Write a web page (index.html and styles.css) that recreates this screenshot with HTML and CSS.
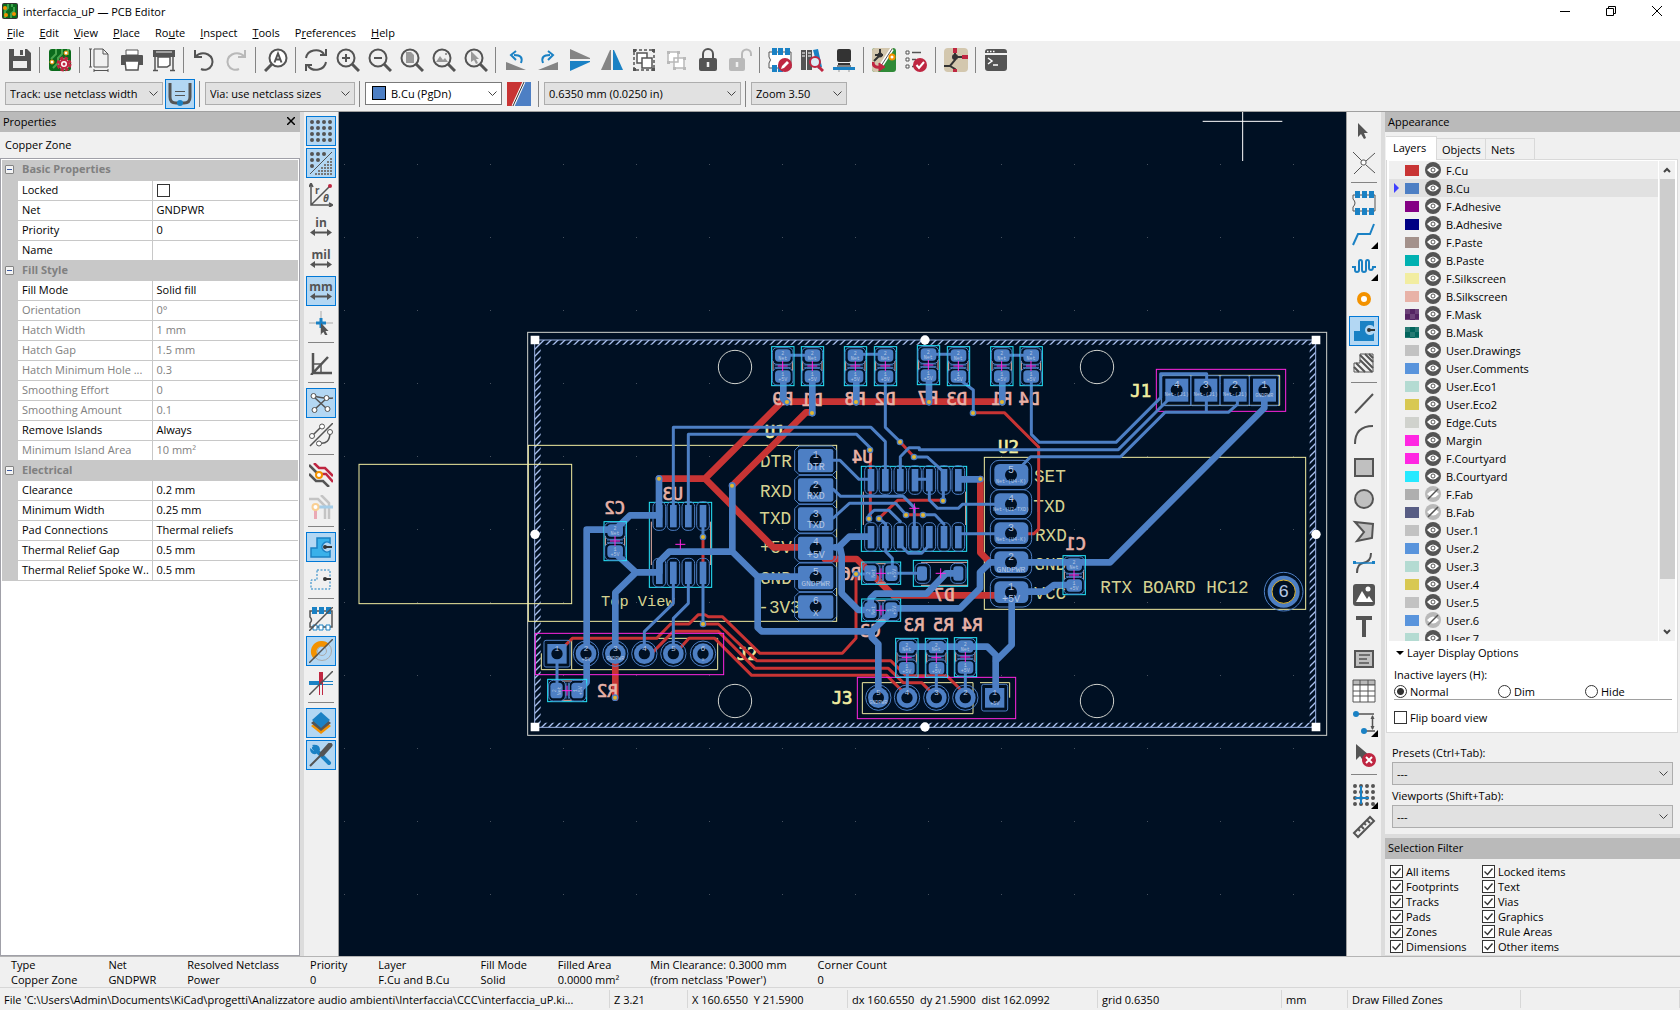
FILE: index.html
```html
<!DOCTYPE html>
<html lang="en">
<head>
    <meta charset="UTF-8">
    <meta name="viewport" content="width=device-width, initial-scale=1.0">
    <title>interfaccia_uP — PCB Editor</title>
    <link rel="stylesheet" href="styles.css">
</head>
<body>
    <header class="titlebar">
        <svg class="app-icon" viewBox="0 0 16 16"><rect width="16" height="16" rx="2" fill="#333"/><rect x="1" y="1" width="14" height="14" fill="#0b6b1c"/><path d="M6 1v4l-3 3v7M10 1v3M9 15v-4l3-3V4" fill="none" stroke="#3fa34d" stroke-width="2"/><circle cx="3" cy="5" r="2" fill="#f39200"/><circle cx="12" cy="11" r="2" fill="#f39200"/><circle cx="4" cy="12" r="2" fill="#f39200"/></svg>
        <h1>interfaccia_uP — PCB Editor</h1>
        <div class="window-buttons">
            <button aria-label="Minimize"><svg viewBox="0 0 10 10"><path d="M0 5.5h10"/></svg></button>
            <button aria-label="Restore"><svg viewBox="0 0 10 10"><path d="M.5 2.5h7v7h-7zM2.5 2.5v-2h7v7h-2"/></svg></button>
            <button aria-label="Close"><svg viewBox="0 0 10 10"><path d="M0 0l10 10M10 0L0 10"/></svg></button>
        </div>
    </header>

    <nav class="menubar">
        <a href="#"><u>F</u>ile</a>
        <a href="#"><u>E</u>dit</a>
        <a href="#"><u>V</u>iew</a>
        <a href="#"><u>P</u>lace</a>
        <a href="#">Ro<u>u</u>te</a>
        <a href="#"><u>I</u>nspect</a>
        <a href="#"><u>T</u>ools</a>
        <a href="#">P<u>r</u>eferences</a>
        <a href="#"><u>H</u>elp</a>
    </nav>

    <div class="toolbars">
        <div class="toolbar">
            <button aria-label="Save"><svg viewBox="0 0 24 24"><path d="M1 1h18l4 4v18H1z" fill="#545454"/><path d="M6 1h11v7H6zM5 13h14v7H5z" fill="#f0f0f0"/><path d="M12 2h3v5h-3z" fill="#545454"/></svg></button>
            <span class="sep"></span>
            <button aria-label="Board setup"><svg viewBox="0 0 24 24"><rect x="1" y="1" width="22" height="22" rx="3" fill="#0b6b1c"/><path d="M8 1v5L3 11M14 1v5l-4 4v5l-5 5M20 1v6" fill="none" stroke="#4aa64f" stroke-width="2"/><circle cx="4" cy="14" r="2" fill="#fff" stroke="#f39200"/><circle cx="18" cy="5" r="2" fill="#fff" stroke="#f39200"/><circle cx="16" cy="16" r="5.500" fill="#fff" stroke="#bf2641" stroke-width="4" stroke-dasharray="3 1.300"/><circle cx="16" cy="16" r="4" fill="#fff" stroke="#bf2641" stroke-width="2"/><circle cx="16" cy="16" r="1.500" fill="#bf2641"/></svg></button>
            <span class="sep"></span>
            <button aria-label="Page settings"><svg viewBox="0 0 24 24" class="line"><path d="M6 1h9l5 5v13H6zM15 1v5h5M2.500 1v18M1 1h3M1 19h3M6 22.500h14M6 21v3M20 21v3"/></svg></button>
            <button aria-label="Print"><svg viewBox="0 0 24 24"><path d="M6 2h12v5H6z" fill="#fff" stroke="#545454"/><path d="M1 8q0-1 1-1h20q1 0 1 1v9H1z" fill="#545454"/><path d="M5 13h14l-1 9H6z" fill="#fff" stroke="#545454" stroke-width="1.500"/></svg></button>
            <button aria-label="Plot"><svg viewBox="0 0 24 24"><path d="M1 2h22v7H1z" fill="#545454"/><path d="M4 4h16" stroke="#f0f0f0"/><path d="M6 9h12v8l-3 2H6z" fill="#fff" stroke="#545454" stroke-width="1.500"/><path d="M3 9v14M21 9v14M1 22.500h5M18 22.500h5" stroke="#545454" stroke-width="1.500"/></svg></button>
            <span class="sep"></span>
            <button aria-label="Undo"><svg viewBox="0 0 24 24" class="thick"><path d="M3 2v7h7M3 9q6-6 13-2.500A8 8 0 1 1 9 21"/></svg></button>
            <button aria-label="Redo" disabled><svg viewBox="0 0 24 24" class="thick pale"><path d="M21 2v7h-7M21 9q-6-6-13-2.500A8 8 0 1 0 15 21"/></svg></button>
            <span class="sep"></span>
            <button aria-label="Find"><svg viewBox="0 0 24 24" class="thick"><circle cx="14" cy="10" r="8.500" fill="#fff"/><path d="M8 16l-7 7" stroke-width="3"/><path d="M10.500 14.500L14 5.500l3.500 9M12 11.500h4"/></svg></button>
            <span class="sep"></span>
            <button aria-label="Refresh"><svg viewBox="0 0 24 24" class="thick"><path d="M2 10a10 9 0 0 1 18-4M22 1v6h-6M22 14a10 9 0 0 1-18 4M2 23v-6h6"/></svg></button>
            <button aria-label="Zoom in"><svg viewBox="0 0 24 24" class="thick"><circle cx="10" cy="10" r="8.500"/><path d="M16 16l7 7" stroke-width="3"/><path d="M6 10h8M10 6v8"/></svg></button>
            <button aria-label="Zoom out"><svg viewBox="0 0 24 24" class="thick"><circle cx="10" cy="10" r="8.500"/><path d="M16 16l7 7" stroke-width="3"/><path d="M6 10h8"/></svg></button>
            <button aria-label="Zoom to fit page"><svg viewBox="0 0 24 24" class="thick"><circle cx="10" cy="10" r="8.500"/><path d="M16 16l7 7" stroke-width="3"/><path d="M6 4h5l3 3v8H6z" fill="#999" stroke="none"/></svg></button>
            <button aria-label="Zoom to objects"><svg viewBox="0 0 24 24" class="thick"><circle cx="10" cy="10" r="8.500"/><path d="M16 16l7 7" stroke-width="3"/><path d="M4 14l4-6 3 4 2-2 3 4zM13 5h2v2h-2z" fill="#999" stroke="none"/></svg></button>
            <button aria-label="Zoom to selection"><svg viewBox="0 0 24 24" class="thick"><circle cx="10" cy="10" r="8.500"/><path d="M16 16l7 7" stroke-width="3"/><path d="M7 3v11l3-2 2 4 2-1-2-4h3z" fill="#999" stroke="none"/></svg></button>
            <span class="sep"></span>
            <button aria-label="Rotate counterclockwise"><svg viewBox="0 0 24 24"><path d="M2 14l20 8H2z" fill="#848484"/><path d="M17 15q3-8-7-8M12 3L7 7l5 5" fill="none" stroke="#1a81c4" stroke-width="2"/></svg></button>
            <button aria-label="Rotate clockwise"><svg viewBox="0 0 24 24"><path d="M22 14L2 22h20z" fill="#848484"/><path d="M7 15Q4 7 14 7M12 3l5 4-5 5" fill="none" stroke="#1a81c4" stroke-width="2"/></svg></button>
            <button aria-label="Mirror vertically"><svg viewBox="0 0 24 24"><path d="M2 1l20 9v1H2z" fill="#848484"/><path d="M2 23l20-9v-1H2z" fill="#1a81c4"/></svg></button>
            <button aria-label="Mirror horizontally"><svg viewBox="0 0 24 24"><path d="M1 22L10 2h1v20z" fill="#848484"/><path d="M23 22L14 2h-1v20z" fill="#1a81c4"/></svg></button>
            <button aria-label="Group"><svg viewBox="0 0 24 24"><rect x="2" y="2" width="20" height="20" fill="none" stroke="#545454" stroke-width="1.500" stroke-dasharray="3 2"/><path d="M5 5h10v10H5z" fill="#fff" stroke="#545454" stroke-width="1.500"/><path d="M10 10h10v10H10z" fill="#fff" stroke="#545454" stroke-width="1.500"/><path d="M1 1h3v3H1zM20 1h3v3h-3zM1 20h3v3H1zM20 20h3v3h-3z" fill="#545454"/></svg></button>
            <button aria-label="Ungroup" disabled><svg viewBox="0 0 24 24"><path d="M4 4h10v10H4zM10 10h10v10H10z" fill="#fff" stroke="#b9b9b9" stroke-width="1.500"/><path d="M3 3h3v3H3zM13 3h3v3h-3zM3 13h3v3H3zM19 9h3v3h-3zM9 19h3v3H9zM19 19h3v3h-3z" fill="#b9b9b9"/></svg></button>
            <button aria-label="Lock"><svg viewBox="0 0 24 24"><path d="M7 11V6a5 5 0 0 1 10 0v5" fill="none" stroke="#545454" stroke-width="2"/><rect x="3" y="10" width="18" height="13" rx="2" fill="#545454"/><path d="M12 14v5" stroke="#f0f0f0" stroke-width="2.500"/></svg></button>
            <button aria-label="Unlock" disabled><svg viewBox="0 0 24 24"><path d="M14 11V6a4.500 4.500 0 0 1 9 0v2" fill="none" stroke="#b9b9b9" stroke-width="2"/><rect x="1" y="10" width="16" height="13" rx="2" fill="#b9b9b9"/><path d="M9 14v5" stroke="#f0f0f0" stroke-width="2.500"/></svg></button>
            <span class="sep"></span>
            <button aria-label="Footprint editor"><svg viewBox="0 0 24 24"><path d="M1 4h22v16H1v-5q3-3 0-6z" fill="#fff" stroke="#545454"/><path d="M4 0h5v7H4zM10 0h5v7h-5zM17 0h5v7h-5zM4 17h5v7H4zM10 17h5v7h-5z" fill="#1a81c4"/><circle cx="17" cy="17" r="7" fill="#bf2641"/><path d="M13 21l1-3 5-5 2 2-5 5z" fill="#fff"/></svg></button>
            <button aria-label="Footprint library browser"><svg viewBox="0 0 24 24"><path d="M1 2h5v20H1zM7 2h5v20H7z" fill="#545454"/><path d="M2 5h3M2 8h3M8 5h3M8 8h3" stroke="#fff"/><path d="M13 2l5-1 4 18-4 2z" fill="#1a81c4"/><path d="M18 18l5 5" stroke="#bf2641" stroke-width="3"/><circle cx="15" cy="14" r="5" fill="#dcecf5" stroke="#bf2641" stroke-width="2"/></svg></button>
            <button aria-label="3D viewer"><svg viewBox="0 0 24 24"><rect x="5" y="1" width="14" height="13" rx="2" fill="#333"/><path d="M6 15h12v2H6z" fill="#333"/><path d="M5 17h14v2H5z" fill="#848484"/><path d="M1 19h22v3H1z" fill="#1a81c4"/><path d="M7 22v2M17 22v2" stroke="#999"/></svg></button>
            <span class="sep"></span>
            <button aria-label="Update PCB from schematic"><svg viewBox="0 0 24 24"><rect x="0" y="0" width="24" height="24" rx="3" fill="#2f8a37"/><path d="M3 0h18L6 24H3q-3 0-3-3V3q0-3 3-3z" fill="#d3c7ae"/><path d="M8 1v6M3 7h8M8 7l-6 6" stroke="#333" stroke-width="2"/><circle cx="8" cy="7" r="2.500" fill="#333"/><path d="M20 1L9 18" stroke="#fff" stroke-width="4"/><path d="M20 1L9 18" stroke="#545454"/><circle cx="20" cy="9" r="2.500" fill="#fff" stroke="#f39200" stroke-width="2"/><path d="M1 14q0 6 7 5" fill="none" stroke="#bf2641" stroke-width="3"/><path d="M7 15l6 4-6 4z" fill="#bf2641" stroke="#bf2641"/></svg></button>
            <button aria-label="Design rules checker"><svg viewBox="0 0 24 24"><path d="M2 3h3v3H2zM2 10h3v3H2zM2 17h3v3H2z" fill="#fff" stroke="#545454"/><path d="M8 4.500h9M8 11.500h4M8 18.500h3" stroke="#545454" stroke-width="1.500"/><circle cx="16" cy="17" r="7" fill="#bf2641"/><path d="M12.500 17l2.500 3 5-6" fill="none" stroke="#fff" stroke-width="2"/></svg></button>
            <span class="sep"></span>
            <button aria-label="Schematic editor"><svg viewBox="0 0 24 24"><rect width="24" height="24" rx="4" fill="#d3c7ae"/><path d="M11 0v12l-5 6H0M11 9h8M6 18l5 3v3" fill="none" stroke="#333" stroke-width="2"/><circle cx="11" cy="9" r="3" fill="#333"/><path d="M9 0h4v5H9zM18 7h6v4h-6zM9 21h4v3H9z" fill="#bf2641"/></svg></button>
            <span class="sep"></span>
            <button aria-label="Scripting console"><svg viewBox="0 0 24 24"><path d="M1 4q0-3 3-3h16q3 0 3 3v1H1zM1 7h22v13q0 3-3 3H4q-3 0-3-3z" fill="#545454"/><path d="M3 3.500h1.500M6 3.500h1.500M9 3.500h1.500" stroke="#fff" stroke-width="1.500"/><path d="M4 10l4 3-4 3M9 17h5" fill="none" stroke="#fff" stroke-width="1.500"/></svg></button>
        </div>
        <div class="toolbar">
            <select class="track" aria-label="Track width"><option>Track: use netclass width</option></select>
            <button class="on" aria-label="Auto track width"><svg viewBox="0 0 24 24"><path d="M2 1v14q0 6 6 6h8q6 0 6-6V1" fill="none" stroke="#545454" stroke-width="3"/><path d="M7 9.500h10M7 13.500h10" stroke="#545454"/><circle cx="12" cy="21" r="3" fill="#1a81c4"/></svg></button>
            <span class="sep"></span>
            <select class="via" aria-label="Via size"><option>Via: use netclass sizes</option></select>
            <span class="sep"></span>
            <div class="layer-select">
                <span class="layer-swatch"></span>
                <select aria-label="Active layer"><option>B.Cu (PgDn)</option></select>
            </div>
            <button class="pair" aria-label="Layer pair"><svg viewBox="0 0 24 24"><path d="M0 0h24v24H0z" fill="#4d7fc4"/><path d="M0 0h17L6 24H0z" fill="#c83434"/><path d="M17 0L6 24" stroke="#fff" stroke-width="3"/><path d="M17 0L6 24" stroke="#333"/></svg></button>
            <span class="sep"></span>
            <select class="grid" aria-label="Grid"><option>0.6350 mm (0.0250 in)</option></select>
            <span class="sep"></span>
            <select class="zoom" aria-label="Zoom"><option>Zoom 3.50</option></select>
        </div>
    </div>

    <main class="workspace">
        <section class="properties">
            <div class="caption"><h2>Properties</h2><button aria-label="Close panel"><svg viewBox="0 0 8 8"><path d="M0 0l8 8M8 0L0 8"/></svg></button></div>
            <p class="item-type">Copper Zone</p>
            <div class="grid-box">
                <table>
                    <colgroup><col class="gutter"><col class="name"><col></colgroup>
                    <tbody>
                        <tr class="category"><td><button aria-label="Collapse"></button></td><th colspan="2">Basic Properties</th></tr>
                        <tr><td></td><th><label for="locked">Locked</label></th><td><input type="checkbox" id="locked"></td></tr>
                        <tr><td></td><th>Net</th><td>GNDPWR</td></tr>
                        <tr><td></td><th>Priority</th><td>0</td></tr>
                        <tr><td></td><th>Name</th><td></td></tr>
                        <tr class="category"><td><button aria-label="Collapse"></button></td><th colspan="2">Fill Style</th></tr>
                        <tr><td></td><th>Fill Mode</th><td>Solid fill</td></tr>
                        <tr class="off"><td></td><th>Orientation</th><td>0°</td></tr>
                        <tr class="off"><td></td><th>Hatch Width</th><td>1 mm</td></tr>
                        <tr class="off"><td></td><th>Hatch Gap</th><td>1.5 mm</td></tr>
                        <tr class="off"><td></td><th>Hatch Minimum Hole ...</th><td>0.3</td></tr>
                        <tr class="off"><td></td><th>Smoothing Effort</th><td>0</td></tr>
                        <tr class="off"><td></td><th>Smoothing Amount</th><td>0.1</td></tr>
                        <tr><td></td><th>Remove Islands</th><td>Always</td></tr>
                        <tr class="off"><td></td><th>Minimum Island Area</th><td>10 mm²</td></tr>
                        <tr class="category"><td><button aria-label="Collapse"></button></td><th colspan="2">Electrical</th></tr>
                        <tr><td></td><th>Clearance</th><td>0.2 mm</td></tr>
                        <tr><td></td><th>Minimum Width</th><td>0.25 mm</td></tr>
                        <tr><td></td><th>Pad Connections</th><td>Thermal reliefs</td></tr>
                        <tr><td></td><th>Thermal Relief Gap</th><td>0.5 mm</td></tr>
                        <tr><td></td><th>Thermal Relief Spoke W..</th><td>0.5 mm</td></tr>
                    </tbody>
                </table>
            </div>
        </section>

        <div class="side-tools left">
            <button class="on" aria-label="Show grid"><svg viewBox="0 0 24 24"><path d="M3 3h20M3 9h20M3 15h20M3 21h20" stroke="#545454" stroke-width="4" stroke-linecap="round" stroke-dasharray="0 6"/></svg></button>
            <button class="on" aria-label="Grid overrides"><svg viewBox="0 0 24 24"><path d="M3 3h14M3 9h8M3 15h2" stroke="#545454" stroke-width="4" stroke-linecap="round" stroke-dasharray="0 6"/><path d="M1 23L23 1" stroke="#545454"/><path d="M21 8h3M18 11h6M15 14h9M12 17h12M9 20h15M6 23h18" stroke="#777" stroke-width="2" stroke-dasharray="2 1"/></svg></button>
            <button aria-label="Polar coordinates"><svg viewBox="0 0 24 24"><path d="M2 1v21h21M2 22L21 3M0 4l2-4 2 4M20 20l4 2-4 2" fill="none" stroke="#545454" stroke-width="1.500"/><circle cx="21" cy="3" r="2" fill="#bf2641"/><text x="6" y="11" class="glyph">r</text><text x="14" y="19" class="glyph italic">θ</text></svg></button>
            <button aria-label="Inches"><svg viewBox="0 0 24 24"><text x="12" y="12" class="unit">in</text><path d="M4 17.500h16" stroke="#545454" stroke-width="2"/><path d="M6 14v7l-5-3.500zM18 14v7l5-3.500z" fill="#545454"/></svg></button>
            <button aria-label="Mils"><svg viewBox="0 0 24 24"><text x="12" y="12" class="unit">mil</text><path d="M4 17.500h16" stroke="#545454" stroke-width="2"/><path d="M6 14v7l-5-3.500zM18 14v7l5-3.500z" fill="#545454"/></svg></button>
            <button class="on" aria-label="Millimeters"><svg viewBox="0 0 24 24"><text x="12" y="12" class="unit">mm</text><path d="M4 17.500h16" stroke="#545454" stroke-width="2"/><path d="M6 14v7l-5-3.500zM18 14v7l5-3.500z" fill="#545454"/></svg></button>
            <button aria-label="Full-window crosshairs"><svg viewBox="0 0 24 24"><path d="M12 0v24M0 12h24" stroke="#aaa"/><path d="M12 7v10M7 12h10" stroke="#1a81c4" stroke-width="3"/><path d="M12 12v11l2.500-2 2 4 2-1-2-4h3z" fill="#545454"/></svg></button>
            <span class="sep"></span>
            <button aria-label="Limit to 45 degrees"><svg viewBox="0 0 24 24"><path d="M4 2v20h19M2 24L19 6" fill="none" stroke="#545454" stroke-width="2.500"/><path d="M4 13h8v9" fill="none" stroke="#545454" stroke-width="1.500"/></svg></button>
            <span class="sep"></span>
            <button class="on" aria-label="Ratsnest"><svg viewBox="0 0 24 24"><path d="M4 5q14 3 20 2M5 6l13 12M18 7L6 18" fill="none" stroke="#545454" stroke-width="1.500"/><g fill="#fff" stroke="#545454"><circle cx="4.500" cy="5" r="2.500"/><circle cx="17.500" cy="7" r="2.500"/><circle cx="5.500" cy="19" r="2.500"/><circle cx="18.500" cy="18" r="2.500"/></g></svg></button>
            <button aria-label="Curved ratsnest"><svg viewBox="0 0 24 24"><path d="M1 23L24 0M3 13L13 3M10 20q11 2 11-11" fill="none" stroke="#545454" stroke-width="1.500"/><g fill="#fff" stroke="#545454"><circle cx="3" cy="13" r="2.500"/><circle cx="13" cy="3.500" r="2.500"/><circle cx="10" cy="20.500" r="2.500"/><circle cx="21" cy="9" r="2.500"/></g></svg></button>
            <span class="sep"></span>
            <button aria-label="High contrast"><svg viewBox="0 0 24 24"><path d="M0 2l9 9M0 11l7 7h7l6 6" fill="none" stroke="#545454" stroke-width="2.500"/><path d="M5 0l5 5h6l8 8M10 11h7l7 8" fill="none" stroke="#bf2641" stroke-width="2.500"/><circle cx="10" cy="12" r="3" fill="#fff" stroke="#f39200" stroke-width="2"/></svg></button>
            <button aria-label="Net highlight" disabled><svg viewBox="0 0 24 24"><path d="M0 4h9l7 7v13M12 0l8 8v16" fill="none" stroke="#c4c4c4" stroke-width="2.500"/><path d="M8 12h16" stroke="#a5cde8" stroke-width="3"/><path d="M6.500 14v10" stroke="#eaa9b4" stroke-width="3"/><circle cx="6.500" cy="12" r="3" fill="#fff" stroke="#f9cf93" stroke-width="2"/></svg></button>
            <span class="sep"></span>
            <button class="on" aria-label="Filled zones"><svg viewBox="0 0 24 24"><path d="M8 3h13v5a5 5 0 1 0 0 8v6H2V13h6z" fill="#39b1ea" stroke="#1a81c4" stroke-width="1.500"/><path d="M16 12h7" stroke="#333" stroke-width="2"/><circle cx="16" cy="12" r="2" fill="#333"/></svg></button>
            <button aria-label="Zone outlines"><svg viewBox="0 0 24 24"><path d="M8 3h13v19H2V13h6z" fill="none" stroke="#1a81c4" stroke-dasharray="2 1.500"/><path d="M16 12h6" stroke="#333" stroke-width="2"/><circle cx="16" cy="12" r="2" fill="#333"/></svg></button>
            <span class="sep"></span>
            <button aria-label="Sketch pads"><svg viewBox="0 0 24 24"><path d="M1 4h22v16H1v-4q3-3 0-6z" fill="none" stroke="#545454" stroke-width="1.500"/><path d="M3 0h5v7H3zM10 0h5v7h-5zM17 0h5v7h-5z" fill="#1a81c4"/><path d="M4 18h4v5H4zM10 18h4v5h-4zM17 18h4v5h-4z" fill="#fff" stroke="#1a81c4"/><path d="M0 24L24 0" stroke="#545454" stroke-width="1.500"/></svg></button>
            <button class="on" aria-label="Sketch vias"><svg viewBox="0 0 24 24"><circle cx="13" cy="12" r="9.500" fill="none" stroke="#aaa"/><circle cx="13" cy="12" r="4.500" fill="none" stroke="#aaa"/><path d="M5 20A10 10 0 1 1 20 5l-4 4a4.500 4.500 0 1 0-7 7z" fill="#f39200"/><path d="M0 24L24 0" stroke="#545454" stroke-width="1.500"/></svg></button>
            <button aria-label="Sketch tracks"><svg viewBox="0 0 24 24"><path d="M0 12h13" stroke="#1a81c4" stroke-width="4"/><path d="M12 1v12" stroke="#bf2641" stroke-width="4"/><path d="M14 10.500h10M14 13.500h10" stroke="#1a81c4"/><path d="M10.500 13v11M13.500 13v11" stroke="#bf2641"/><path d="M0 24L24 0" stroke="#545454" stroke-width="1.500"/></svg></button>
            <span class="sep"></span>
            <button class="on" aria-label="Layers manager"><svg viewBox="0 0 24 24"><path d="M12 8l10 7-10 8-10-8z" fill="#f39200"/><path d="M12 4l10 8-10 8-10-8z" fill="#545454"/><path d="M12 1l9 8-9 8-9-8z" fill="#1a81c4"/></svg></button>
            <button class="on" aria-label="Properties manager"><svg viewBox="0 0 24 24"><path d="M5 5l15 15" stroke="#1a81c4" stroke-width="4" stroke-linecap="round"/><path d="M3 2l4 4v2H5L1 5q0 7 6 6l4-4Q11 1 3 2z" fill="#1a81c4"/><path d="M1 23L14 10" stroke="#545454" stroke-width="2"/><path d="M13 11l8-9" stroke="#545454" stroke-width="5" stroke-linecap="round"/></svg></button>
        </div>

        <section class="canvas" aria-label="Board">
            <!-- board units: 3 per screen pixel -->
            <svg viewBox="-513 -639 3021 2532">
                <defs>
                    <pattern id="dots" width="219" height="219" patternUnits="userSpaceOnUse" x="159" y="174"><rect width="3" height="3" fill="#46505e"/></pattern>
                    <pattern id="hatch" width="21" height="21" patternUnits="userSpaceOnUse"><path d="M-3 24L24 -3M-3 3L3 -3M18 24L24 18" stroke="#a9bfee" stroke-width="4"/></pattern>
                    <g id="chip">
                        <rect x="-33" y="-58" width="67" height="117" class="crtyd"/>
                        <path d="M-29 -15v30M29 -15v30" class="bsilk"/>
                        <rect x="-31" y="-55" width="62" height="50" rx="14" class="clear"/>
                        <rect x="-31" y="7" width="62" height="50" rx="14" class="clear"/>
                        <path d="M-24 -3h48M-24 4h48" class="clear"/>
                        <rect x="-23" y="-50" width="47" height="37" rx="11" class="pad"/>
                        <rect x="-23" y="13" width="47" height="37" rx="11" class="pad"/>
                        <path d="M-15 0h30M0 -15v30" class="anchor"/>
                        <text x="0" y="-33" class="tiny">2</text>
                        <text x="0" y="30" class="tiny">1</text>
                        <text x="0" y="-19" class="tiny">Net</text>
                        <text x="0" y="45" class="tiny">+5V</text>
                    </g>
                    <g id="big">
                        <path d="M-50 -43h100l13 13v60l-13 13h-100l-13-13v-60z" class="clear"/>
                        <rect x="-53" y="-34" width="106" height="70" rx="7" class="pad"/>
                        <circle r="18" class="hole"/>
                    </g>
                    <g id="mid">
                        <rect x="-62" y="-44" width="124" height="88" rx="26" class="clear"/>
                        <rect x="-50" y="-33" width="102" height="65" rx="16" class="pad"/>
                        <circle r="18" class="hole"/>
                    </g>
                    <g id="leg">
                        <rect x="-19" y="-43" width="38" height="86" rx="15" class="clear"/>
                        <rect x="-10" y="-33" width="20" height="67" class="pad"/>
                    </g>
                    <g id="round">
                        <circle r="38" class="clear"/>
                        <circle r="31" class="pad"/>
                        <circle r="17" class="hole"/>
                    </g>
                    <g id="square">
                        <rect x="-39" y="-40" width="78" height="80" rx="6" class="clear"/>
                        <rect x="-29" y="-29" width="58" height="59" class="pad"/>
                        <circle r="17" class="hole"/>
                    </g>
                    <g id="pin">
                        <rect x="-45" y="-43" width="88" height="90" rx="5" class="clear"/>
                        <rect x="-34" y="-34" width="69" height="69" class="pad"/>
                        <circle r="18" class="hole"/>
                    </g>
                    <g id="via"><circle r="10" class="pad"/><circle r="6" fill="#e3b72e"/></g>
                </defs>

                <rect x="-513" y="-639" width="3021" height="2532" fill="url(#dots)"/>

                <!-- edge cuts and zone border -->
                <g class="edge">
                    <rect x="53" y="22" width="2397" height="1209"/>
                    <circle cx="675" cy="126" r="50"/><circle cx="1761" cy="126" r="50"/>
                    <circle cx="675" cy="1128" r="50"/><circle cx="1761" cy="1128" r="50"/>
                </g>
                <path d="M74 45H2417V1207H74zM92 59V1193H2399V59z" fill="url(#hatch)" fill-rule="evenodd"/>
                <rect x="74" y="45" width="2343" height="1162" class="zone"/>

                <!-- front silkscreen -->
                <g class="fsilk">
                    <rect x="55" y="361" width="925" height="528"/>
                    <rect x="-453" y="418" width="638" height="418"/>
                    <rect x="1423" y="397" width="964" height="456"/>
                    <path d="M185 940h438v94H185zM94 985v49h91M1057 1073h332v93h-332zM1410 1073h89v45M1954 151h355v90h-355z"/>
                </g>
                <g class="fsilk-text">
                    <text x="750" y="427">DTR</text><text x="750" y="515">RXD</text><text x="748" y="597">TXD</text>
                    <text x="750" y="685">+5V</text><text x="750" y="777">GND</text><text x="745" y="864">-3V3</text>
                    <text x="273" y="844" class="small">Top View</text>
                    <text x="1572" y="471">SET</text><text x="1570" y="560">TXD</text><text x="1575" y="647">RXD</text>
                    <text x="1573" y="734">GND</text><text x="1573" y="821">VCC</text>
                    <text x="1771" y="805">RTX BOARD HC12</text>
                </g>
                <g class="fsilk-ref">
                    <text x="764" y="338">U1</text><text x="1464" y="383">U2</text><text x="1861" y="216">J1</text>
                    <text x="680" y="1005">J2</text><text x="965" y="1137">J3</text>
                </g>

                <!-- front copper -->
                <g class="fcu wide">
                    <path d="M447 461H585L816 230H1475M585 461L790 667H866M667 482L888 262H906M945 702H1040L1150 811H1455M1411 462V683L1440 712M316 1000V1118"/>
                </g>
                <g class="fcu">
                    <path d="M1081 375V580M1107 580L1163 526H1299M1188 569H1239M1170 350L1212 396M1389 263H1483L1586 366V612L1572 626H1540M579 636V740"/>
                    <path d="M1038 747V940L997 985H750L637 875H595L585 869H565L537 897H482L440 940H187L162 965"/>
                    <path d="M425 985L490 919H625L735 1030H1135L1180 1073H1235L1262 1100M579 897H625L740 1007H1142L1188 1052H1310L1350 1092M510 970L537 940H614L725 1051H1130L1172 1093"/>
                </g>

                <!-- back silkscreen, mirrored -->
                <g class="bsilk-ref" transform="scale(-1 1)">
                    <text x="-818" y="241">R9</text><text x="-906" y="244">D1</text><text x="-1035" y="241">R8</text><text x="-1125" y="241">D2</text>
                    <text x="-1253" y="238">R7</text><text x="-1340" y="241">D3</text><text x="-1475" y="241">R1</text><text x="-1557" y="241">D4</text>
                    <text x="-488" y="524">U3</text><text x="-314" y="568">C2</text><text x="-292" y="1115">R2</text><text x="-1057" y="413">U4</text>
                    <text x="-1022" y="764">R6</text><text x="-1697" y="675">C1</text><text x="-1302" y="829">D7</text><text x="-1081" y="937">C3</text>
                    <text x="-1212" y="918">R3</text><text x="-1300" y="918">R5</text><text x="-1386" y="918">R4</text>
                </g>
                <g class="bsilk"><path d="M424 590v130M602 590v130M1060 500v100M1367 500v100M1233 712h140M1233 781h140"/></g>

                <!-- courtyards -->
                <g class="fcrtyd"><rect x="76" y="925" width="565" height="124"/><rect x="1042" y="1057" width="475" height="124"/><rect x="1939" y="133" width="388" height="126"/></g>
                <g class="crtyd"><rect x="418" y="532" width="187" height="255"/><rect x="1054" y="424" width="316" height="255"/><rect x="1210" y="706" width="163" height="78"/></g>

                <!-- back copper -->
                <g class="bcu wide">
                    <path d="M447 461V575M437 571H360L318 612M314 614H230V1072L212 1090M316 685L378 742H448M378 742L316 803V985M448 740V710L478 680H667M667 482V680L743 755H870M743 755V908L755 919H1085L1148 858M1085 919V937L1105 957V1118"/>
                    <path d="M975 667H990L995 690V805L1045 855H1080M985 667L1018 635H1078M1082 855V820L1097 806H1250L1308 745H1345M1150 850H1350L1410 790V742L1440 712H1800L2263 249V200M1540 800H1605L1632 780H1695M1505 810V960L1457 1008M1190 965H1432L1457 990V1118M820 160V222L831 232M907 160V265M1039 160V232M1257 160V232M1477 160V232M1345 463H1408"/>
                </g>
                <g class="bcu">
                    <path d="M490 575V307H1083L1126 350V460M535 575V328H1040L1080 368M970 406H990L1047 463H1083M970 493L992 514H1180L1213 548V640M970 579L1018 535H1157L1188 569M1126 160V307L1170 350M1171 460V395L1197 368H1228V374H1825L1980 219M1564 160V328L1588 352H1818L1952 218V146H2090V195M1540 418L1562 395H1832L1965 262H2155L2182 238V200M2089 200V262"/>
                    <path d="M1212 396H1252L1300 440V527M1344 160L1390 195V263M840 91H905M1040 88H1125M1257 88H1340M1477 91H1563M1258 460V525L1283 550H1345L1357 538H1500M1345 626H1500M1239 569H1275L1302 598M1077 580V570L1092 556H1137L1171 590M1171 660L1195 685H1235L1258 660M1107 580L1127 597V680L1147 700V745H1230M1038 747H1075M579 575V636M579 740V897M490 745V835L403 920V985M535 745V835L490 880V985M141 985V1095M1192 1035V1118M1279 1035V1118M1366 1035V1118M1213 463H1258"/>
                </g>

                <!-- pads -->
                <use href="#chip" x="818" y="123"/><use href="#chip" x="907" y="123"/><use href="#chip" x="1036" y="123"/><use href="#chip" x="1126" y="123"/>
                <use href="#chip" x="1255" y="120"/><use href="#chip" x="1345" y="123"/><use href="#chip" x="1475" y="123"/><use href="#chip" x="1563" y="123"/>
                <use href="#chip" x="315" y="648"/><use href="#chip" x="1692" y="750"/><use href="#chip" x="1190" y="998"/><use href="#chip" x="1279" y="998"/><use href="#chip" x="1366" y="996"/>
                <use href="#chip" transform="translate(171 1097) rotate(-90)"/><use href="#chip" transform="translate(1113 745) rotate(-90)"/><use href="#chip" transform="translate(1113 856) rotate(-90)"/>
                <g><rect x="1215" y="715" width="46" height="60" rx="15" class="clear"/><rect x="1322" y="715" width="46" height="60" rx="15" class="clear"/><rect x="1221" y="724" width="30" height="43" rx="9" class="pad"/><rect x="1330" y="724" width="30" height="43" rx="9" class="pad"/><path d="M1277 745h30M1292 730v30" class="anchor"/></g>

                <use href="#leg" x="448" y="573"/><use href="#leg" x="490" y="573"/><use href="#leg" x="535" y="573"/><use href="#leg" x="579" y="573"/>
                <use href="#leg" x="448" y="743"/><use href="#leg" x="490" y="743"/><use href="#leg" x="535" y="743"/><use href="#leg" x="579" y="743"/>
                <use href="#leg" x="1083" y="465"/><use href="#leg" x="1126" y="465"/><use href="#leg" x="1171" y="465"/><use href="#leg" x="1215" y="465"/><use href="#leg" x="1258" y="465"/><use href="#leg" x="1302" y="465"/><use href="#leg" x="1345" y="465"/>
                <use href="#leg" x="1083" y="636"/><use href="#leg" x="1126" y="636"/><use href="#leg" x="1171" y="636"/><use href="#leg" x="1215" y="636"/><use href="#leg" x="1258" y="636"/><use href="#leg" x="1302" y="636"/><use href="#leg" x="1345" y="636"/>
                <path d="M496 658h30M511 643v30M1198 550h30M1213 535v30" class="anchor"/>

                <use href="#big" x="917" y="406"/><use href="#big" x="917" y="494"/><use href="#big" x="917" y="581"/><use href="#big" x="917" y="669"/><use href="#big" x="917" y="757"/><use href="#big" x="917" y="845"/>
                <use href="#mid" x="1503" y="450"/><use href="#mid" x="1503" y="538"/><use href="#mid" x="1503" y="625"/><use href="#mid" x="1503" y="712"/><use href="#mid" x="1503" y="802"/>
                <use href="#square" x="141" y="986"/><use href="#round" x="228" y="986"/><use href="#round" x="316" y="986"/><use href="#round" x="403" y="986"/><use href="#round" x="490" y="986"/><use href="#round" x="579" y="986"/>
                <use href="#round" x="1105" y="1118"/><use href="#round" x="1191" y="1118"/><use href="#round" x="1279" y="1118"/><use href="#round" x="1366" y="1118"/><use href="#square" x="1454" y="1118"/>
                <use href="#pin" x="2000" y="195"/><use href="#pin" x="2087" y="195"/><use href="#pin" x="2175" y="195"/><use href="#pin" x="2263" y="195"/>
                <g><circle cx="2321" cy="800" r="58" class="clear"/><circle cx="2321" cy="800" r="48" class="pad"/><circle cx="2321" cy="800" r="35" fill="#001023" stroke="#e3b72e" stroke-width="3"/></g>

                <!-- pad numbers and net names -->
                <g class="pad-text">
                    <text x="917" y="400">1</text><text x="917" y="435">DTR</text>
                    <text x="917" y="488">2</text><text x="917" y="523">RXD</text>
                    <text x="917" y="575">3</text><text x="917" y="610">TXD</text>
                    <text x="917" y="661">4</text><text x="917" y="698">+5V</text>
                    <text x="917" y="750">5</text><text x="917" y="783" class="net">GNDPWR</text>
                    <text x="917" y="838">6</text><text x="917" y="872">x</text>
                    <text x="1503" y="443">5</text><text x="1503" y="473" class="tiny">Net-(U4-K)</text>
                    <text x="1503" y="532">4</text><text x="1503" y="559" class="tiny">Net-(U2-TXD)</text>
                    <text x="1503" y="618">3</text><text x="1503" y="647" class="tiny">Net-(U4-K)</text>
                    <text x="1503" y="706">2</text><text x="1503" y="740" class="net">GNDPWR</text>
                    <text x="1503" y="795">1</text><text x="1503" y="832">+5V</text>
                    <text x="2000" y="189">4</text><text x="2087" y="189">3</text><text x="2175" y="189">2</text><text x="2263" y="189">1</text>
                    <text x="2000" y="212" class="tiny">Net-(J1)</text><text x="2087" y="212" class="tiny">Net-(J1)</text><text x="2175" y="212" class="tiny">Net-(J1)</text><text x="2263" y="216" class="tiny">GNDPWR</text>
                    <text x="141" y="977" class="net">1</text><text x="228" y="977" class="net">2</text><text x="316" y="977" class="net">3</text><text x="403" y="977" class="net">4</text><text x="490" y="977" class="net">5</text><text x="579" y="977" class="net">6</text>
                    <text x="228" y="1008" class="tiny">+5V</text><text x="316" y="1005" class="tiny">GNDPWR</text><text x="579" y="1008" class="tiny">x</text>
                    <text x="1105" y="1110" class="net">5</text><text x="1191" y="1110" class="net">4</text><text x="1279" y="1110" class="net">3</text><text x="1366" y="1110" class="net">2</text><text x="1454" y="1110" class="net">1</text>
                    <text x="1105" y="1137" class="tiny">GNDPWR</text><text x="1454" y="1140" class="tiny">+5V</text>
                    <text x="2321" y="817" class="large">6</text>
                </g>

                <use href="#via" x="831" y="231"/><use href="#via" x="906" y="264"/><use href="#via" x="1038" y="231"/><use href="#via" x="1257" y="231"/><use href="#via" x="1476" y="231"/>
                <use href="#via" x="1389" y="264"/><use href="#via" x="1170" y="351"/><use href="#via" x="1212" y="396"/><use href="#via" x="1080" y="375"/><use href="#via" x="447" y="461"/><use href="#via" x="666" y="482"/>
                <use href="#via" x="579" y="636"/><use href="#via" x="579" y="897"/><use href="#via" x="315" y="1118"/><use href="#via" x="1038" y="747"/><use href="#via" x="1077" y="581"/><use href="#via" x="1107" y="581"/>
                <use href="#via" x="1188" y="570"/><use href="#via" x="1239" y="570"/><use href="#via" x="1299" y="527"/><use href="#via" x="1411" y="462"/>

                <!-- zone handles and cursor -->
                <g fill="#fff">
                    <path d="M62 32h26v26H62zM2405 32h26v26h-26zM62 1193h26v26H62zM2405 1193h26v26h-26z"/>
                    <circle cx="1245" cy="45" r="14"/><circle cx="1245" cy="1206" r="14"/><circle cx="75" cy="628" r="14"/><circle cx="2418" cy="628" r="14"/>
                </g>
                <path d="M2078 -611H2317M2198 -639V-492" stroke="#fff" stroke-width="3"/>
            </svg>
        </section>

        <div class="side-tools right">
            <button aria-label="Select"><svg viewBox="0 0 24 24"><path d="M6 4v14l3-3 3 5 2-1-2-5h4z" fill="#545454"/></svg></button>
            <button aria-label="Local ratsnest"><svg viewBox="0 0 24 24" class="line"><path d="M1 1l9 9M23 2l-9 8M2 23l8-8M23 22l-9-8"/><rect x="9" y="9" width="5" height="5" rx="2" fill="#fff"/></svg></button>
            <span class="sep"></span>
            <button aria-label="Place footprint"><svg viewBox="0 0 24 24"><path d="M1 4h22v16H1v-4q4-4 0-8z" fill="#f0f0f0" stroke="#545454"/><path d="M3 0h5v7H3zM10 0h5v7h-5zM17 0h5v7h-5zM3 17h5v7H3zM10 17h5v7h-5zM17 17h5v7h-5z" fill="#1a81c4"/></svg></button>
            <button class="more" aria-label="Route tracks"><svg viewBox="0 0 24 24"><path d="M1 22l5-11h12l4-10" fill="none" stroke="#1a81c4" stroke-width="2"/></svg></button>
            <button class="more" aria-label="Tune length"><svg viewBox="0 0 24 24"><path d="M0 12h3v3q0 2 2 2t2-2V7q0-2 1.500-2T10 7v8q0 2 2 2t2-2V7q0-2 1.500-2T17 7v6q0 2 2 2t2-3h3" fill="none" stroke="#1a81c4" stroke-width="2"/></svg></button>
            <button aria-label="Place via"><svg viewBox="0 0 24 24"><circle cx="12" cy="12" r="5" fill="#fff" stroke="#f39200" stroke-width="4"/></svg></button>
            <button class="on" aria-label="Draw filled zones"><svg viewBox="0 0 24 24"><path d="M8 2h14v6a5 5 0 1 0 0 6v8H2V12h6z" fill="#1a81c4"/><path d="M17 11h6" stroke="#333" stroke-width="2"/><circle cx="17" cy="11" r="2" fill="#333"/></svg></button>
            <button aria-label="Draw rule areas"><svg viewBox="0 0 24 24" class="line"><path d="M8 3h13v18H2V12h6z"/><path d="M8 4l13 13M8 9l12 12M4 12l9 9M2 16l5 5M13 3l8 8M17 3l4 4" stroke-width="2"/></svg></button>
            <span class="sep"></span>
            <button aria-label="Line"><svg viewBox="0 0 24 24" class="thick"><path d="M3 22L21 3"/></svg></button>
            <button aria-label="Arc"><svg viewBox="0 0 24 24" class="thick"><path d="M3 21Q3 3 21 3"/></svg></button>
            <button aria-label="Rectangle"><svg viewBox="0 0 24 24" class="thick"><path d="M3 4h18v17H3z" fill="#c0c0c0"/></svg></button>
            <button aria-label="Circle"><svg viewBox="0 0 24 24" class="thick"><circle cx="12" cy="12" r="9" fill="#c0c0c0"/></svg></button>
            <button aria-label="Polygon"><svg viewBox="0 0 24 24" class="thick"><path d="M3 3l18 2-1 14-15 3 7-9z" fill="#c0c0c0"/></svg></button>
            <button aria-label="Bezier"><svg viewBox="0 0 24 24" class="thick"><path d="M5 22q0-9 6-10 8-1 8-10"/><path d="M3 12h18" stroke="#1a81c4" stroke-width="1.500"/><path d="M1 10h3v3H1zM20 10h3v3h-3z" fill="#1a81c4" stroke="none"/></svg></button>
            <button aria-label="Image"><svg viewBox="0 0 24 24"><rect x="1" y="1" width="22" height="22" rx="3" fill="#545454"/><path d="M4 19l6-11 5 8 2-3 4 6z" fill="#fff"/><circle cx="16" cy="6" r="2.500" fill="#fff"/></svg></button>
            <button aria-label="Text"><svg viewBox="0 0 24 24"><path d="M4 3h16M12 3v19" stroke="#545454" stroke-width="4"/></svg></button>
            <button aria-label="Text box"><svg viewBox="0 0 24 24" class="thick"><path d="M3 4h18v16H3z" fill="#c0c0c0"/><path d="M7 8h11M7 12h8M7 16h10" stroke-width="1.500"/></svg></button>
            <button aria-label="Table"><svg viewBox="0 0 24 24" class="line"><path d="M1 1h22v5H1z" fill="#b9b9b9"/><path d="M1 6h22v17H1z" fill="#fff"/><path d="M1 12h22M1 17h22M8 1v22M16 1v22"/></svg></button>
            <button class="more" aria-label="Dimension"><svg viewBox="0 0 24 24"><path d="M4 3h18M12 20h11M20.500 5v13" stroke="#545454" stroke-width="1.500"/><path d="M18.500 8l2-4 2 4zM18.500 15l2 4 2-4z" fill="#545454"/><circle cx="4" cy="3" r="3" fill="#1a81c4"/><circle cx="12" cy="20" r="3" fill="#1a81c4"/></svg></button>
            <button aria-label="Delete"><svg viewBox="0 0 24 24"><path d="M4 1v16l4-4 4 6 3-2-3-5h5z" fill="#545454"/><circle cx="17" cy="17" r="7" fill="#bf2641"/><path d="M14 14l6 6M20 14l-6 6" stroke="#fff" stroke-width="2"/></svg></button>
            <span class="sep"></span>
            <button class="more" aria-label="Grid origin"><svg viewBox="0 0 24 24"><path d="M3 3h20M3 9h20M3 15h20M3 21h20" stroke="#545454" stroke-width="4" stroke-linecap="round" stroke-dasharray="0 6"/><path d="M9 3v18M3 15h14" stroke="#1a81c4" stroke-width="2"/></svg></button>
            <button aria-label="Measure"><svg viewBox="0 0 24 24" class="line"><path d="M2 18L18 2l4 4L6 22zM6 14l2 2M9 11l3 3M12 8l2 2M15 5l3 3" stroke-width="2"/></svg></button>
        </div>

        <aside class="appearance">
            <div class="caption"><h2>Appearance</h2></div>
            <div class="tabs" role="tablist">
                <button role="tab" class="active">Layers</button>
                <button role="tab">Objects</button>
                <button role="tab">Nets</button>
            </div>
            <div class="notebook">
                <div class="layer-box">
                    <div class="layers" id="layers"></div>
                    <div class="scrollbar">
                        <svg viewBox="0 0 8 6"><path d="M1 5l3-3 3 3"/></svg>
                        <div class="thumb"></div>
                        <svg viewBox="0 0 8 6"><path d="M1 1l3 3 3-3"/></svg>
                    </div>
                </div>
                <button class="expander">Layer Display Options</button>
                <p class="hint">Inactive layers (H):</p>
                <div class="radios">
                    <label><input type="radio" name="inactive" checked>Normal</label>
                    <label><input type="radio" name="inactive">Dim</label>
                    <label><input type="radio" name="inactive">Hide</label>
                </div>
                <label class="flip"><input type="checkbox">Flip board view</label>
            </div>
            <div class="presets">
                <label for="presets">Presets (Ctrl+Tab):</label>
                <select id="presets"><option>---</option></select>
                <label for="viewports">Viewports (Shift+Tab):</label>
                <select id="viewports"><option>---</option></select>
            </div>
            <div class="caption filter-caption"><h2>Selection Filter</h2></div>
            <div class="filter">
                <label><input type="checkbox" checked>All items</label>
                <label><input type="checkbox" checked>Locked items</label>
                <label><input type="checkbox" checked>Footprints</label>
                <label><input type="checkbox" checked>Text</label>
                <label><input type="checkbox" checked>Tracks</label>
                <label><input type="checkbox" checked>Vias</label>
                <label><input type="checkbox" checked>Pads</label>
                <label><input type="checkbox" checked>Graphics</label>
                <label><input type="checkbox" checked>Zones</label>
                <label><input type="checkbox" checked>Rule Areas</label>
                <label><input type="checkbox" checked>Dimensions</label>
                <label><input type="checkbox" checked>Other items</label>
            </div>
        </aside>
    </main>

    <dl class="message-panel">
        <div><dt>Type</dt><dd>Copper Zone</dd></div>
        <div><dt>Net</dt><dd>GNDPWR</dd></div>
        <div><dt>Resolved Netclass</dt><dd>Power</dd></div>
        <div><dt>Priority</dt><dd>0</dd></div>
        <div><dt>Layer</dt><dd>F.Cu and B.Cu</dd></div>
        <div><dt>Fill Mode</dt><dd>Solid</dd></div>
        <div><dt>Filled Area</dt><dd>0.0000 mm²</dd></div>
        <div><dt>Min Clearance: 0.3000 mm</dt><dd>(from netclass 'Power')</dd></div>
        <div><dt>Corner Count</dt><dd>0</dd></div>
    </dl>

    <footer class="statusbar">
        <span>File 'C:\Users\Admin\Documents\KiCad\progetti\Analizzatore audio ambienti\Interfaccia\CCC\interfaccia_uP.ki...</span>
        <span>Z 3.21</span>
        <span>X 160.6550&nbsp; Y 21.5900</span>
        <span>dx 160.6550&nbsp; dy 21.5900&nbsp; dist 162.0992</span>
        <span>grid 0.6350</span>
        <span>mm</span>
        <span>Draw Filled Zones</span>
        <span></span>
    </footer>

    <script>
        // name, colour, visible
        const layers = [
            ["F.Cu", "#c83434", true],
            ["B.Cu", "#4d7fc4", true],
            ["F.Adhesive", "#840084", true],
            ["B.Adhesive", "#000084", true],
            ["F.Paste", "#a3918b", true],
            ["B.Paste", "#00b1b1", true],
            ["F.Silkscreen", "#f2eda1", true],
            ["B.Silkscreen", "#e8b2a7", true],
            ["F.Mask", "#552463", true],
            ["B.Mask", "#02645c", true],
            ["User.Drawings", "#c2c2c2", true],
            ["User.Comments", "#5994dc", true],
            ["User.Eco1", "#b4dbd2", true],
            ["User.Eco2", "#d8c852", true],
            ["Edge.Cuts", "#d0d2cd", true],
            ["Margin", "#ff26e2", true],
            ["F.Courtyard", "#ff26e2", true],
            ["B.Courtyard", "#26e9ff", true],
            ["F.Fab", "#afafaf", false],
            ["B.Fab", "#585d84", false],
            ["User.1", "#c2c2c2", true],
            ["User.2", "#5994dc", true],
            ["User.3", "#b4dbd2", true],
            ["User.4", "#d8c852", true],
            ["User.5", "#c2c2c2", true],
            ["User.6", "#5994dc", false],
            ["User.7", "#b4dbd2", true]
        ];

        const eyeOn = `<svg viewBox="0 0 16 16"><circle cx="8" cy="8" r="8" fill="#545454"/><path d="M2 8q6-7 12 0-6 7-12 0z" fill="#fff"/><circle cx="8" cy="8" r="2" fill="#fff" stroke="#545454"/></svg>`;
        const eyeOff = `<svg viewBox="0 0 16 16"><circle cx="8" cy="8" r="8" fill="#b9b9b9"/><path d="M2 8q6-7 12 0-6 7-12 0z" fill="#fff"/><path d="M3 13L13 3" stroke="#545454" stroke-width="1.500"/></svg>`;

        document.getElementById("layers").innerHTML = layers.map(([name, color, visible]) => `
            <div class="layer${name === "B.Cu" ? " current" : ""}">
                <span class="arrow"></span>
                <span class="swatch${name.endsWith("Mask") ? " translucent" : ""}" style="background-color: ${color}"></span>
                <button aria-label="Toggle ${name}">${visible ? eyeOn : eyeOff}</button>
                <span>${name}</span>
            </div>
        `).join("");
    </script>
</body>
</html>
```
FILE: styles.css
```css
* {
    box-sizing: border-box;
}

body {
    margin: 0;
    height: 100vh;
    display: flex;
    flex-direction: column;
    overflow: hidden;
    background: #f0f0f0;
    color: #000;
    font-family: "Open Sans", "Noto Sans", sans-serif;
    font-size: 11px;
    line-height: 15px;
}

h1, h2, p, dl, dd {
    margin: 0;
    font-size: 11px;
    font-weight: normal;
}

button {
    padding: 0;
    border: 0;
    background: none;
    font: inherit;
    color: inherit;
}

/* Title and menu */
.titlebar {
    display: flex;
    align-items: center;
    height: 22px;
    padding-left: 2px;
    background: #fff;
}

.app-icon {
    width: 16px;
    height: 16px;
    margin-right: 5px;
}

.titlebar h1 {
    flex: 1;
}

.window-buttons {
    display: flex;
    height: 20px;
}

.window-buttons button {
    width: 46px;
    display: flex;
    align-items: center;
    justify-content: center;
}

.window-buttons svg {
    width: 10px;
    height: 10px;
    fill: none;
    stroke: #000;
}

.menubar {
    display: flex;
    gap: 15px;
    height: 19px;
    padding: 3px 0 0 7px;
    background: #fff;
}

.menubar a {
    color: #000;
    text-decoration: none;
}

/* Toolbars */
.toolbars {
    padding: 4px 5px 0;
    height: 71px;
    border-bottom: 1px solid #a0a0a0;
}

.toolbar {
    display: flex;
    align-items: center;
    gap: 2px;
    height: 34px;
    padding-bottom: 4px;
}

.toolbar button, .side-tools button {
    position: relative;
    flex: none;
    width: 30px;
    height: 30px;
    border: 1px solid transparent;
    display: flex;
    align-items: center;
    justify-content: center;
}

.toolbar button svg, .side-tools button svg {
    width: 24px;
    height: 24px;
}

.toolbar button.on, .side-tools button.on {
    border-color: #0078d7;
    background: #b3d7f3;
}

.toolbar .sep {
    width: 2px;
    height: 26px;
    margin: 0 2px;
    border-left: 1px solid #848484;
}

svg.line {
    fill: none;
    stroke: #545454;
}

svg.thick {
    fill: none;
    stroke: #545454;
    stroke-width: 2;
}

svg.pale {
    stroke: #b9b9b9;
}

.glyph {
    font: bold 10px "Open Sans", sans-serif;
    fill: #545454;
}

.italic {
    font-style: italic;
}

.unit {
    font: bold 12px "Open Sans", sans-serif;
    fill: #545454;
    text-anchor: middle;
}

select {
    appearance: none;
    height: 23px;
    padding: 0 20px 1px 4px;
    border: 1px solid #adadad;
    border-radius: 0;
    background: #e1e1e1 url("data:image/svg+xml,%3Csvg xmlns='http://www.w3.org/2000/svg' width='9' height='6'%3E%3Cpath d='M.5.5l4 4 4-4' fill='none' stroke='%23444'/%3E%3C/svg%3E") no-repeat right 4px center;
    font: inherit;
    color: #000;
}

.toolbar select {
    margin-bottom: 1px;
}

.track {
    width: 158px;
}

.via {
    width: 150px;
}

.grid {
    width: 197px;
}

.zoom {
    width: 96px;
}

.layer-select {
    position: relative;
}

.layer-select select {
    display: block;
    width: 137px;
    padding-left: 25px;
    border-color: #7a7a7a;
    background-color: #fff;
}

.layer-swatch {
    position: absolute;
    left: 7px;
    top: 4px;
    width: 14px;
    height: 14px;
    border: 1px solid #000;
    background: #4d7fc4;
}

/* Workspace */
.workspace {
    flex: 1;
    display: flex;
    min-height: 0;
}

.caption {
    display: flex;
    align-items: center;
    justify-content: space-between;
    flex: none;
    height: 20px;
    padding: 0 5px 2px 3px;
    background: #bababa;
}

.caption svg {
    display: block;
    width: 8px;
    height: 8px;
    stroke: #000;
    stroke-width: 1.5;
}

.properties {
    flex: 0 0 300px;
    display: flex;
    flex-direction: column;
}

.item-type {
    padding: 5px 5px 6px;
}

.grid-box {
    flex: 1;
    padding: 1px;
    border: 1px solid #a0a0a8;
    background: #fff;
}

.properties table {
    width: 100%;
    table-layout: fixed;
    border-collapse: collapse;
}

.gutter {
    width: 16px;
}

.name {
    width: 134px;
}

.properties tr {
    height: 20px;
}

.properties td, .properties th {
    padding: 0 4px 2px;
    border-bottom: 1px solid #c8c8c8;
    font-weight: normal;
    text-align: left;
    white-space: nowrap;
    overflow: hidden;
    line-height: 17px;
}

.properties td:first-child {
    padding: 0 3px;
    background: #c8c8c8;
}

.properties td:last-child {
    border-left: 1px solid #c8c8c8;
}

.properties .off {
    color: #808080;
}

.properties .category th {
    background: #c8c8c8;
    color: #808080;
    font-weight: bold;
}

.category button {
    display: block;
    width: 9px;
    height: 9px;
    border: 1px solid #848484;
    border-radius: 1px;
    background: linear-gradient(#3c5aa0, #3c5aa0) no-repeat center / 5px 1px #f4f4f4;
}

input[type="checkbox"] {
    appearance: none;
    flex: none;
    width: 13px;
    height: 13px;
    margin: 0;
    border: 1px solid #333;
    background: #fff;
    vertical-align: middle;
}

input[type="checkbox"]:checked {
    background: #fff url("data:image/svg+xml,%3Csvg xmlns='http://www.w3.org/2000/svg' width='11' height='11'%3E%3Cpath d='M1.500 5.500l3 3 5-6' fill='none' stroke='%23333' stroke-width='1.400'/%3E%3C/svg%3E") no-repeat center;
}

/* Vertical toolbars */
.side-tools {
    flex: none;
    display: flex;
    flex-direction: column;
    align-items: center;
    gap: 2px;
    width: 39px;
    padding-top: 4px;
    border-left: 4px solid #dcdcdc;
}

.side-tools.left {
    border-right: 1px solid #a0a0a0;
}

.side-tools.right {
    border-left: 1px solid #a0a0a0;
    border-right: 4px solid #dcdcdc;
}

.side-tools .sep {
    width: 26px;
    height: 2px;
    margin: 2px 0;
    border-top: 1px solid #848484;
}

.more::after {
    content: "";
    position: absolute;
    right: 0;
    bottom: 0;
    border-left: 7px solid transparent;
    border-bottom: 7px solid #000;
}

/* Board canvas */
.canvas {
    flex: 1;
    min-width: 0;
    background: #001023;
}

.canvas svg {
    display: block;
    width: 100%;
    height: 100%;
}

.edge, .zone, .fsilk, .bsilk, .fcrtyd, .crtyd, .clear, .anchor, .fcu, .bcu {
    fill: none;
    stroke-width: 3;
}

.edge {
    stroke: #d0d2cd;
}

.zone {
    stroke: #9bb3e4;
}

.fsilk {
    stroke: #f2eda1;
}

.bsilk {
    stroke: #e8b2a7;
}

.fcrtyd, .anchor {
    stroke: #ff26e2;
}

.crtyd {
    stroke: #26e9ff;
}

.clear {
    stroke: #4d7fc4;
}

.fcu, .bcu {
    stroke-width: 9;
    stroke-linejoin: round;
    stroke-linecap: round;
}

.fcu {
    stroke: #c83434;
}

.bcu {
    stroke: #4d7fc4;
}

.wide {
    stroke-width: 20;
}

.pad {
    fill: #4d7fc4;
}

.hole {
    fill: #001023;
}

.fsilk-text {
    font: 53px "Liberation Mono", monospace;
    fill: #f2eda1;
    fill-opacity: 0.9;
}

.fsilk-text .small {
    font-size: 46px;
}

.fsilk-ref {
    font: 52px "DejaVu Sans Mono", monospace;
    fill: #f2eda1;
    stroke: #f2eda1;
    stroke-width: 2;
}

.bsilk-ref {
    font: 52px "DejaVu Sans Mono", monospace;
    fill: #e8b2a7;
    stroke: #e8b2a7;
    stroke-width: 2;
    text-anchor: middle;
}

.pad-text {
    font: 30px "Liberation Mono", monospace;
    fill: #b4c6e2;
    text-anchor: middle;
}

.net {
    font-size: 24px;
}

.tiny {
    font: 15px "Liberation Mono", monospace;
    fill: #b4c6e2;
    text-anchor: middle;
}

.large {
    font-size: 54px;
}

/* Appearance */
.appearance {
    flex: 0 0 295px;
    display: flex;
    flex-direction: column;
    border-bottom: 1px solid #dcdcdc;
}

.tabs {
    flex: none;
    display: flex;
    align-items: flex-end;
    height: 27px;
    padding-left: 1px;
}

.tabs button {
    height: 21px;
    width: 49px;
    padding-left: 5px;
    border: 1px solid #d9d9d9;
    border-left: 0;
    border-bottom: 0;
    text-align: left;
}

.tabs button.active {
    position: relative;
    height: 24px;
    width: 51px;
    margin-bottom: -1px;
    padding: 0 0 3px 7px;
    background: #fff;
}

.notebook {
    flex: none;
    margin: 0 2px 0 1px;
    padding: 1px 2px 7px;
    border: 1px solid #d9d9d9;
    background: #fff;
}

.layer-box {
    display: flex;
    height: 480px;
    background: #f0f0f0;
}

.layers {
    flex: 1;
    overflow: hidden;
    border-right: 1px solid #fff;
}

.layer {
    display: flex;
    align-items: center;
    height: 18px;
}

.layer.current {
    background: #e1e1e1;
}

.arrow {
    width: 5px;
    margin: 0 6px 0 5px;
    border: 5px solid transparent;
    border-right: 0;
}

.current .arrow {
    border-left-color: #4040ff;
}

.swatch {
    width: 14px;
    height: 11px;
}

.translucent {
    background-image: conic-gradient(transparent 25%, #ffffff24 0 50%, transparent 0 75%, #ffffff24 0);
    background-size: 10px 10px;
}

.layer button {
    width: 16px;
    height: 16px;
    margin: 0 5px 0 6px;
}

.layer svg {
    display: block;
}

.scrollbar {
    width: 16px;
    display: flex;
    flex-direction: column;
    align-items: center;
}

.scrollbar svg {
    width: 8px;
    height: 6px;
    margin: 6px 0;
    fill: none;
    stroke: #444;
    stroke-width: 2;
}

.thumb {
    width: 15px;
    height: 400px;
    background: #cdcdcd;
}

.scrollbar svg:last-child {
    margin-top: auto;
}

.expander {
    display: flex;
    align-items: center;
    gap: 3px;
    margin: 4px 0 0 7px;
}

.expander::before {
    content: "";
    border: 4px solid transparent;
    border-top-color: #000;
    border-bottom: 0;
}

.hint {
    margin: 7px 0 0 5px;
}

.radios {
    display: grid;
    grid-template-columns: 104px 87px 1fr;
    margin: 2px 3px 0 5px;
    border-bottom: 1px solid #a0a0a0;
}

label {
    display: flex;
    align-items: center;
    gap: 3px;
}

.radios input {
    appearance: none;
    width: 13px;
    height: 13px;
    margin: 0;
    border: 1px solid #333;
    border-radius: 50%;
    background: #fff;
}

.radios input:checked {
    background: radial-gradient(#333 0 3px, #fff 4px);
}

.flip {
    margin: 10px 0 0 5px;
}

.presets {
    flex: none;
    display: flex;
    flex-direction: column;
    margin: 0 7px;
    padding: 12px 0 3px;
}

.presets select {
    margin: 2px 0 3px;
}

.filter-caption {
    height: 25px;
    border-top: 4px solid #dcdcdc;
}

.filter {
    display: grid;
    grid-template-columns: 92px 1fr;
    padding: 5px 5px 0;
}

/* Bottom bars */
.message-panel {
    display: flex;
    gap: 31px;
    height: 31px;
    padding-left: 11px;
    border-top: 1px solid #b4b4b4;
    white-space: nowrap;
}

.statusbar {
    display: grid;
    grid-template-columns: 610px 78px 160px 250px 184px 66px 173px 1fr;
    height: 23px;
    padding: 2px 0;
    border-top: 1px solid #d7d7d7;
    white-space: nowrap;
}

.statusbar span {
    padding: 2px 4px;
    border-right: 1px solid #d7d7d7;
    overflow: hidden;
}
```
